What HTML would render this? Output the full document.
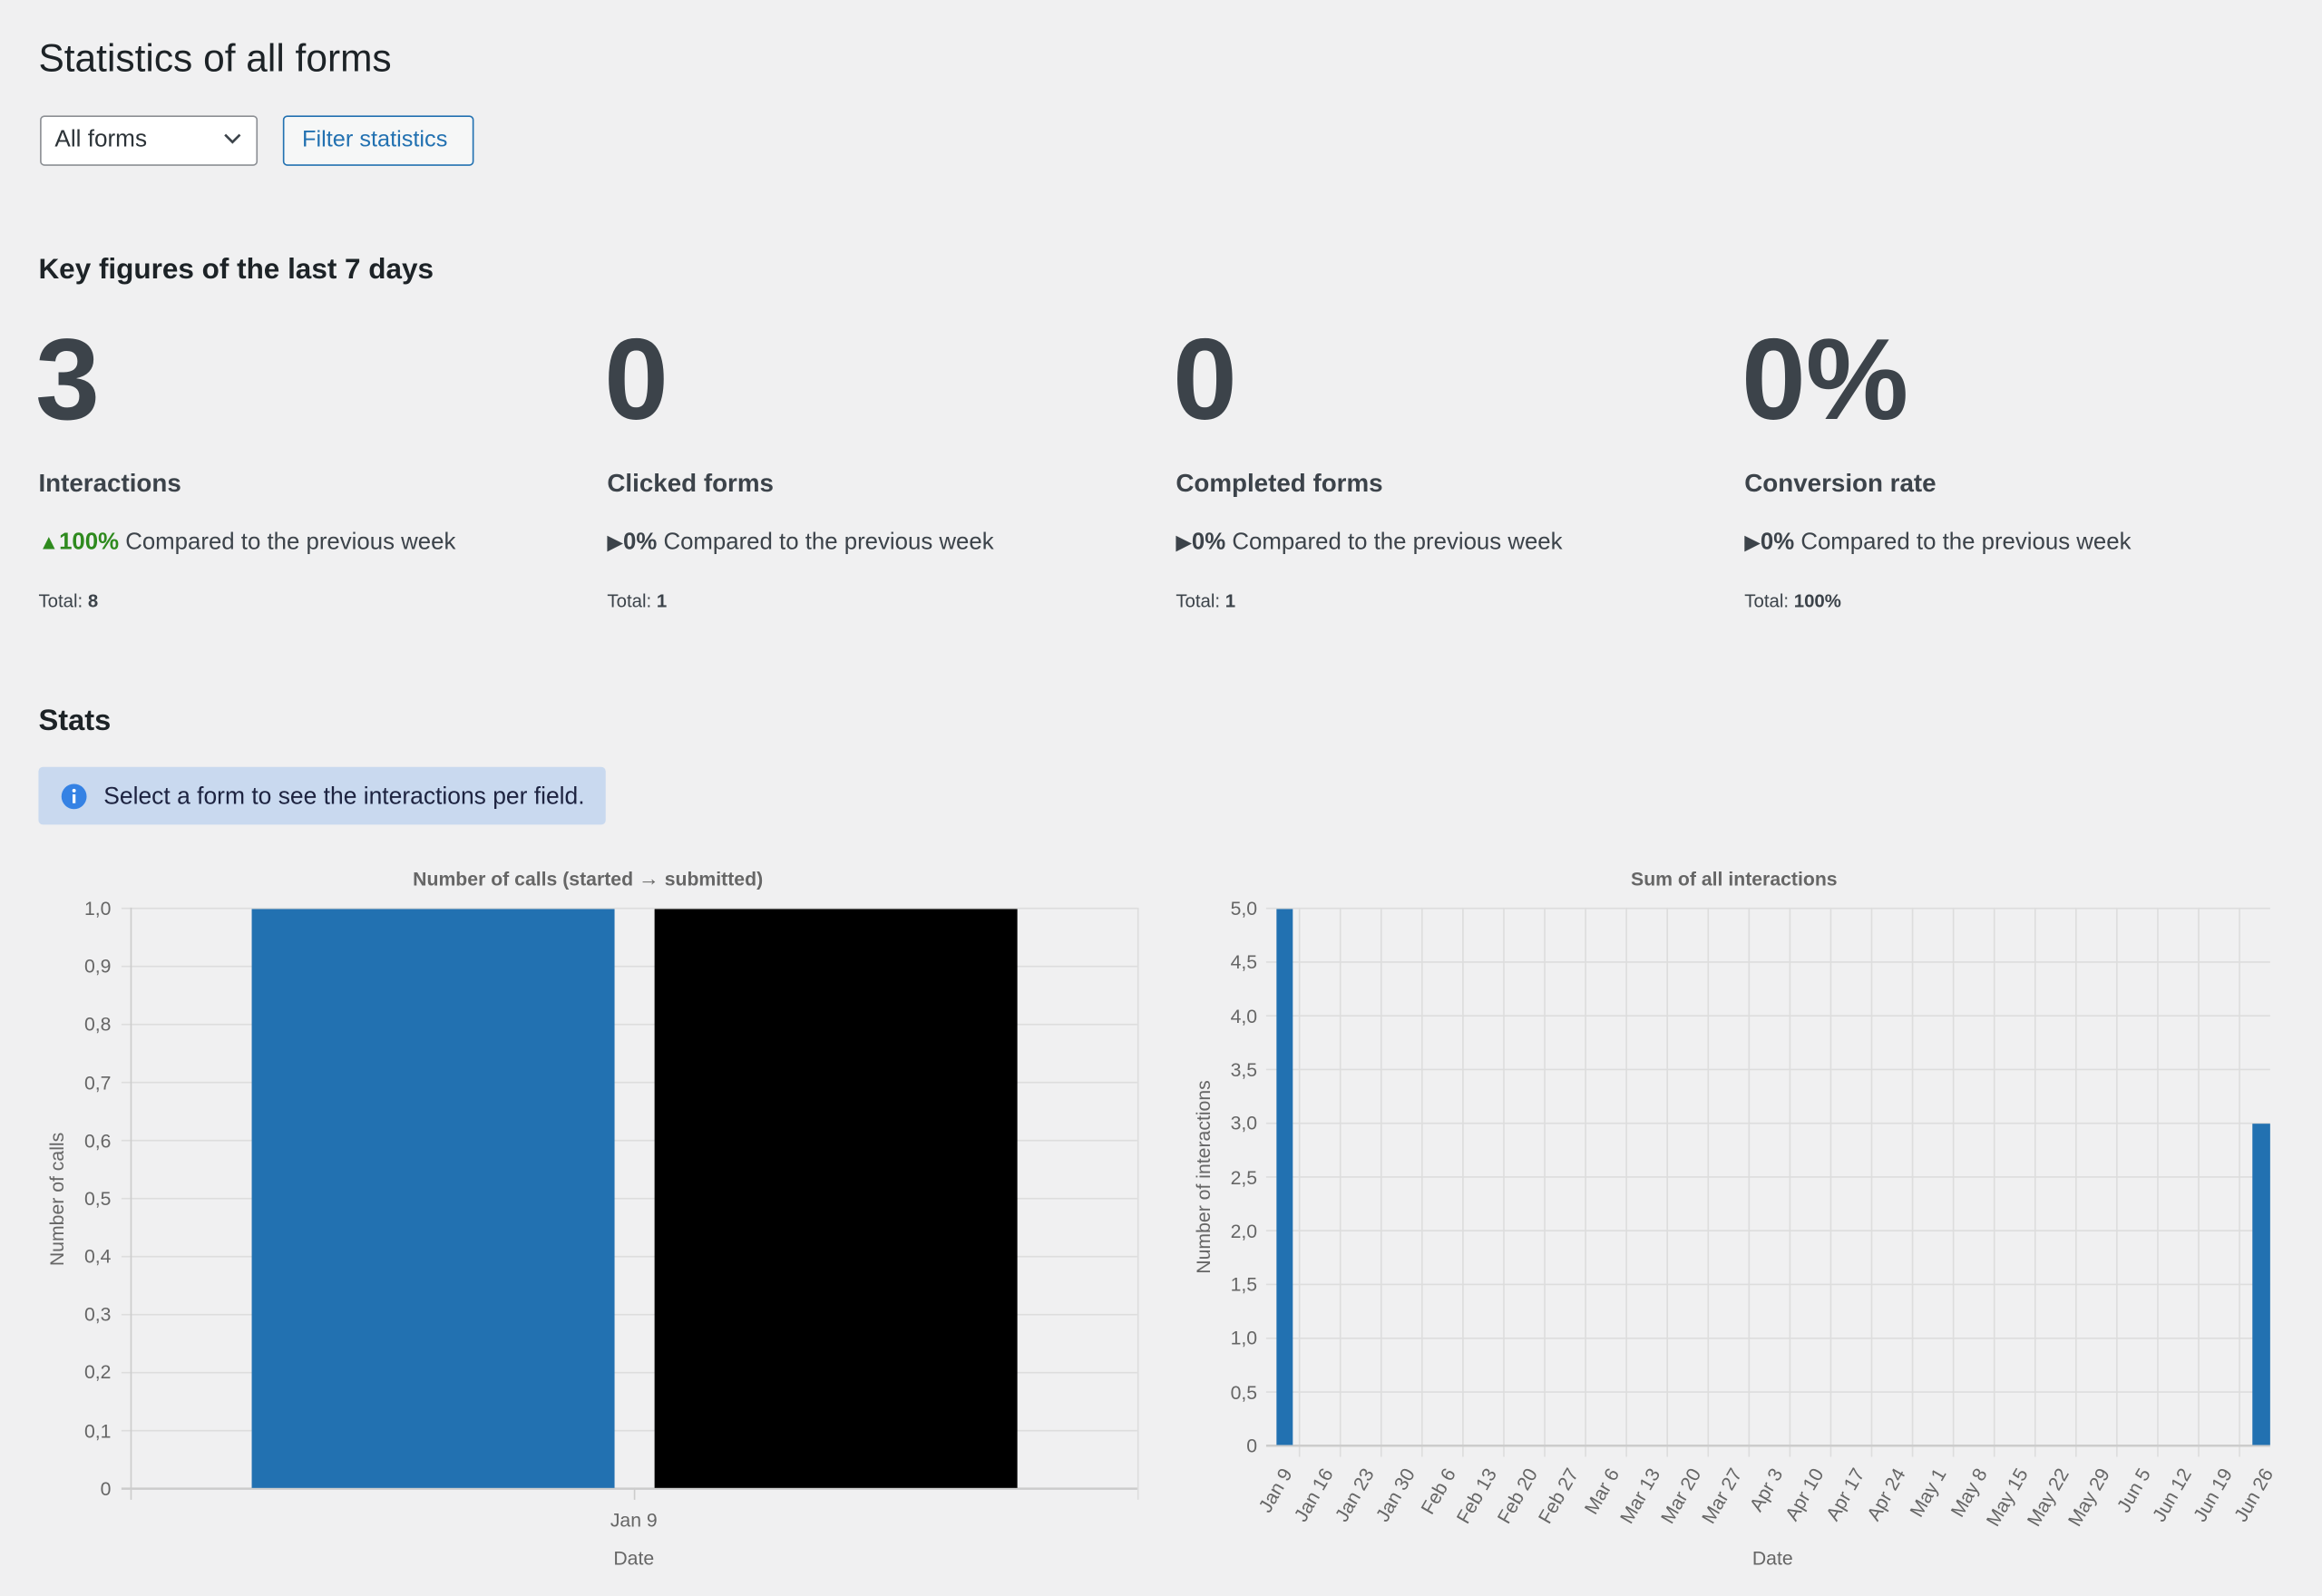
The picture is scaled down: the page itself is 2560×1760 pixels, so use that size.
<!DOCTYPE html>
<html><head><meta charset="utf-8"><style>
html,body{margin:0;padding:0;background:#f0f0f1;width:2560px;height:1760px;overflow:hidden}
#w{position:absolute;left:0;top:0;width:1568px;height:1078px;transform:scale(1.632653);transform-origin:0 0;font-family:"Liberation Sans",sans-serif;color:#1d2327}
.a{position:absolute;white-space:nowrap}
.num{font-size:78px;font-weight:bold;color:#3c434a;top:211px}
.lbl{font-size:17px;font-weight:bold;color:#3c434a;top:317px}
.cmp{font-size:15.8px;color:#3c434a;top:358px}
.tri{font-size:14px}
.tot{font-size:12.5px;color:#3c434a;top:399px}
</style></head><body><div id="w">
<div class="a" style="left:26px;top:24px;font-size:26px;">Statistics of all forms</div>
<div class="a" style="left:27px;top:78px;width:145px;height:32px;border:1px solid #8c8f94;border-radius:3px;background:#fff;"></div>
<div class="a" style="left:37px;top:86px;font-size:16px;color:#2c3338">All forms</div>
<svg class="a" style="left:150px;top:89px" width="14" height="10"><path d="M2 2 L7 7 L12 2" fill="none" stroke="#3c434a" stroke-width="1.6"/></svg>
<div class="a" style="left:191px;top:78px;width:127px;height:32px;border:1px solid #2271b1;border-radius:3px;background:#f6f7f7;"></div>
<div class="a" style="left:204px;top:86px;font-size:15.5px;color:#2271b1">Filter statistics</div>
<div class="a" style="left:26px;top:172px;font-size:19.3px;font-weight:bold">Key figures of the last 7 days</div>

<div class="a num" style="left:24px">3</div>
<div class="a num" style="left:408px">0</div>
<div class="a num" style="left:792px">0</div>
<div class="a num" style="left:1176px">0%</div>
<div class="a lbl" style="left:26px">Interactions</div>
<div class="a lbl" style="left:410px">Clicked forms</div>
<div class="a lbl" style="left:794px">Completed forms</div>
<div class="a lbl" style="left:1178px">Conversion rate</div>
<div class="a cmp" style="left:26px"><span class="tri" style="color:#2e8a1e">▲</span><b style="color:#2e8a1e">100%</b> Compared to the previous week</div>
<div class="a cmp" style="left:410px"><span class="tri">▶</span><b>0%</b> Compared to the previous week</div>
<div class="a cmp" style="left:794px"><span class="tri">▶</span><b>0%</b> Compared to the previous week</div>
<div class="a cmp" style="left:1178px"><span class="tri">▶</span><b>0%</b> Compared to the previous week</div>
<div class="a tot" style="left:26px">Total: <b>8</b></div>
<div class="a tot" style="left:410px">Total: <b>1</b></div>
<div class="a tot" style="left:794px">Total: <b>1</b></div>
<div class="a tot" style="left:1178px">Total: <b>100%</b></div>

<div class="a" style="left:26px;top:476px;font-size:20px;font-weight:bold">Stats</div>
<div class="a" style="left:26px;top:518px;width:383px;height:39px;background:#c9d9ef;border-radius:3px"></div>
<svg class="a" style="left:41px;top:529px" width="18" height="18"><circle cx="9" cy="9" r="8.5" fill="#3582e4"/><rect x="8" y="7.5" width="2" height="6" fill="#fff"/><circle cx="9" cy="5" r="1.2" fill="#fff"/></svg>
<div class="a" style="left:70px;top:529px;font-size:16.2px;color:#1d2340">Select a form to see the interactions per field.</div>

<svg class="a" style="left:0;top:0" width="1568" height="1078" font-family="Liberation Sans, sans-serif">
<g fill="#666" font-size="13">
<text x="397" y="598" text-anchor="middle" font-weight="bold">Number of calls (started <tspan font-size="14">→</tspan> submitted)</text>
<text x="1171" y="598" text-anchor="middle" font-weight="bold">Sum of all interactions</text>
</g>
<g stroke="#ddd" stroke-width="1">
<line x1="82" y1="613.5" x2="768" y2="613.5"/><line x1="82" y1="652.7" x2="768" y2="652.7"/><line x1="82" y1="691.9" x2="768" y2="691.9"/><line x1="82" y1="731.1" x2="768" y2="731.1"/><line x1="82" y1="770.3" x2="768" y2="770.3"/><line x1="82" y1="809.5" x2="768" y2="809.5"/><line x1="82" y1="848.7" x2="768" y2="848.7"/><line x1="82" y1="887.9" x2="768" y2="887.9"/><line x1="82" y1="927.1" x2="768" y2="927.1"/><line x1="82" y1="966.3" x2="768" y2="966.3"/>
<line x1="768.5" y1="613" x2="768.5" y2="1013"/>
</g>
<line x1="82" y1="1005.5" x2="768" y2="1005.5" stroke="#ccc" stroke-width="1.5"/>
<line x1="88.5" y1="613" x2="88.5" y2="1013" stroke="#ccc"/>
<line x1="428.5" y1="1005" x2="428.5" y2="1013" stroke="#ccc"/>
<rect x="170" y="614" width="245" height="391" fill="#2271b1"/>
<rect x="442" y="614" width="245" height="391" fill="#000"/>
<g fill="#666" font-size="13" text-anchor="end">
<text x="75" y="618">1,0</text><text x="75" y="657">0,9</text><text x="75" y="696">0,8</text><text x="75" y="736">0,7</text><text x="75" y="775">0,6</text><text x="75" y="814">0,5</text><text x="75" y="853">0,4</text><text x="75" y="892">0,3</text><text x="75" y="931">0,2</text><text x="75" y="971">0,1</text><text x="75" y="1010">0</text>
</g>
<text x="428" y="1031" fill="#666" font-size="13" text-anchor="middle">Jan 9</text>
<text x="428" y="1057" fill="#666" font-size="13" text-anchor="middle">Date</text>
<text transform="translate(43,810) rotate(-90)" fill="#666" font-size="13" text-anchor="middle">Number of calls</text>
<g stroke="#ddd" stroke-width="1">
<line x1="855" y1="613.5" x2="1533" y2="613.5"/><line x1="855" y1="649.8" x2="1533" y2="649.8"/><line x1="855" y1="686.1" x2="1533" y2="686.1"/><line x1="855" y1="722.4" x2="1533" y2="722.4"/><line x1="855" y1="758.7" x2="1533" y2="758.7"/><line x1="855" y1="795" x2="1533" y2="795"/><line x1="855" y1="831.3" x2="1533" y2="831.3"/><line x1="855" y1="867.6" x2="1533" y2="867.6"/><line x1="855" y1="903.9" x2="1533" y2="903.9"/><line x1="855" y1="940.2" x2="1533" y2="940.2"/>
<line x1="877.5" y1="613" x2="877.5" y2="984"/><line x1="905.1" y1="613" x2="905.1" y2="984"/><line x1="932.7" y1="613" x2="932.7" y2="984"/><line x1="960.3" y1="613" x2="960.3" y2="984"/><line x1="987.9" y1="613" x2="987.9" y2="984"/><line x1="1015.5" y1="613" x2="1015.5" y2="984"/><line x1="1043.1" y1="613" x2="1043.1" y2="984"/><line x1="1070.7" y1="613" x2="1070.7" y2="984"/><line x1="1098.3" y1="613" x2="1098.3" y2="984"/><line x1="1125.9" y1="613" x2="1125.9" y2="984"/><line x1="1153.5" y1="613" x2="1153.5" y2="984"/><line x1="1181.1" y1="613" x2="1181.1" y2="984"/><line x1="1208.7" y1="613" x2="1208.7" y2="984"/><line x1="1236.3" y1="613" x2="1236.3" y2="984"/><line x1="1263.9" y1="613" x2="1263.9" y2="984"/><line x1="1291.5" y1="613" x2="1291.5" y2="984"/><line x1="1319.1" y1="613" x2="1319.1" y2="984"/><line x1="1346.7" y1="613" x2="1346.7" y2="984"/><line x1="1374.3" y1="613" x2="1374.3" y2="984"/><line x1="1401.9" y1="613" x2="1401.9" y2="984"/><line x1="1429.5" y1="613" x2="1429.5" y2="984"/><line x1="1457.1" y1="613" x2="1457.1" y2="984"/><line x1="1484.7" y1="613" x2="1484.7" y2="984"/><line x1="1512.3" y1="613" x2="1512.3" y2="984"/>
</g>
<line x1="855" y1="976.5" x2="1533" y2="976.5" stroke="#ccc" stroke-width="1.5"/>
<rect x="862" y="614" width="11" height="362" fill="#2271b1"/>
<rect x="1521" y="759" width="12" height="217" fill="#2271b1"/>
<g fill="#666" font-size="13" text-anchor="end">
<text x="849" y="618">5,0</text><text x="849" y="654">4,5</text><text x="849" y="691">4,0</text><text x="849" y="727">3,5</text><text x="849" y="763">3,0</text><text x="849" y="800">2,5</text><text x="849" y="836">2,0</text><text x="849" y="872">1,5</text><text x="849" y="908">1,0</text><text x="849" y="945">0,5</text><text x="849" y="981">0</text>
</g>
<g fill="#666" font-size="13" text-anchor="end">
<text transform="translate(873,995) rotate(-60)">Jan 9</text>
<text transform="translate(900.6,995) rotate(-60)">Jan 16</text>
<text transform="translate(928.2,995) rotate(-60)">Jan 23</text>
<text transform="translate(955.8,995) rotate(-60)">Jan 30</text>
<text transform="translate(983.4,995) rotate(-60)">Feb 6</text>
<text transform="translate(1011,995) rotate(-60)">Feb 13</text>
<text transform="translate(1038.6,995) rotate(-60)">Feb 20</text>
<text transform="translate(1066.2,995) rotate(-60)">Feb 27</text>
<text transform="translate(1093.8,995) rotate(-60)">Mar 6</text>
<text transform="translate(1121.4,995) rotate(-60)">Mar 13</text>
<text transform="translate(1149,995) rotate(-60)">Mar 20</text>
<text transform="translate(1176.6,995) rotate(-60)">Mar 27</text>
<text transform="translate(1204.2,995) rotate(-60)">Apr 3</text>
<text transform="translate(1231.8,995) rotate(-60)">Apr 10</text>
<text transform="translate(1259.4,995) rotate(-60)">Apr 17</text>
<text transform="translate(1287,995) rotate(-60)">Apr 24</text>
<text transform="translate(1314.6,995) rotate(-60)">May 1</text>
<text transform="translate(1342.2,995) rotate(-60)">May 8</text>
<text transform="translate(1369.8,995) rotate(-60)">May 15</text>
<text transform="translate(1397.4,995) rotate(-60)">May 22</text>
<text transform="translate(1425,995) rotate(-60)">May 29</text>
<text transform="translate(1452.6,995) rotate(-60)">Jun 5</text>
<text transform="translate(1480.2,995) rotate(-60)">Jun 12</text>
<text transform="translate(1507.8,995) rotate(-60)">Jun 19</text>
<text transform="translate(1535.4,995) rotate(-60)">Jun 26</text>
</g>
<text x="1197" y="1057" fill="#666" font-size="13" text-anchor="middle">Date</text>
<text transform="translate(817,795) rotate(-90)" fill="#666" font-size="13" text-anchor="middle">Number of interactions</text>
</svg>
</div></body></html>
